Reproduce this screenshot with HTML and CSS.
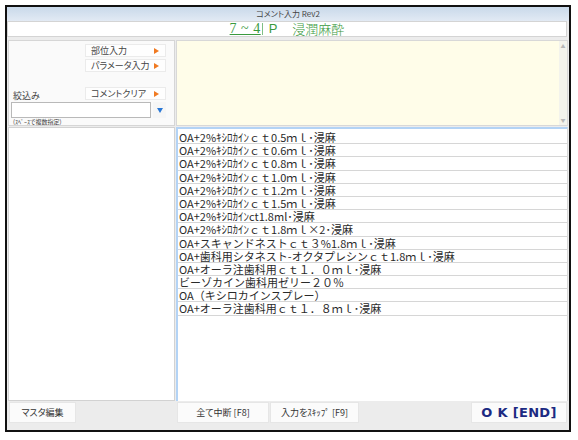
FILE: index.html
```html
<!DOCTYPE html>
<html lang="ja">
<head>
<meta charset="utf-8">
<title>コメント入力 Rev2</title>
<link rel="stylesheet" href="styles.css">
</head>
<body>
<div class="window">
  <div class="titlebar">コメント入力 Rev2</div>
  <div class="header">
    <span class="range">7 ~ 4</span><span class="caret"></span>
    <span class="page">P</span>
    <span class="kind">浸潤麻酔</span>
  </div>
  <div class="main">
    <div class="ctrl-panel">
      <div class="side-btn">部位入力<span class="tri-r"></span></div>
      <div class="side-btn second">パラメータ入力<span class="tri-r"></span></div>
      <div class="filter-row">
        <span class="filter-label">絞込み</span>
        <div class="side-btn">コメントクリア<span class="tri-r"></span></div>
      </div>
      <div class="input-row">
        <div class="filter-input"></div>
        <div class="drop-btn"><span class="tri-d"></span></div>
      </div>
      <div class="hint">(ｽﾍﾟｰｽで複数指定)</div>
    </div>
    <div class="memo">
      <div class="memo-text"></div>
      <div class="memo-scroll"><span class="arrow">&#9650;</span><span class="arrow">&#9660;</span></div>
    </div>
    <div class="side-list"></div>
    <div class="list">
      <div class="row">OA+2%ｷｼﾛｶｲﾝｃｔ0.5ｍｌ･浸麻</div>
      <div class="row">OA+2%ｷｼﾛｶｲﾝｃｔ0.6ｍｌ･浸麻</div>
      <div class="row">OA+2%ｷｼﾛｶｲﾝｃｔ0.8ｍｌ･浸麻</div>
      <div class="row">OA+2%ｷｼﾛｶｲﾝｃｔ1.0ｍｌ･浸麻</div>
      <div class="row">OA+2%ｷｼﾛｶｲﾝｃｔ1.2ｍｌ･浸麻</div>
      <div class="row">OA+2%ｷｼﾛｶｲﾝｃｔ1.5ｍｌ･浸麻</div>
      <div class="row">OA+2%ｷｼﾛｶｲﾝct1.8ml･浸麻</div>
      <div class="row">OA+2%ｷｼﾛｶｲﾝｃｔ1.8ｍｌ×2･浸麻</div>
      <div class="row">OA+スキャンドネストｃｔ３%1.8ｍｌ･浸麻</div>
      <div class="row">OA+歯科用シタネスト-オクタプレシンｃｔ1.8ｍｌ･浸麻</div>
      <div class="row">OA+オーラ注歯科用ｃｔ１．０ｍｌ･浸麻</div>
      <div class="row">ビーゾカイン歯科用ゼリー２０％</div>
      <div class="row">OA（キシロカインスプレー）</div>
      <div class="row">OA+オーラ注歯科用ｃｔ１．８ｍｌ･浸麻</div>
    </div>
  </div>
  <div class="footer">
    <div class="fbtn btn-master">マスタ編集</div>
    <div class="fbtn btn-stop">全て中断 [F8]</div>
    <div class="fbtn btn-skip">入力をｽｷｯﾌﾟ [F9]</div>
    <div class="fbtn btn-ok">O K [END]</div>
  </div>
</div>
</body>
</html>
```
FILE: styles.css
```css
html, body {
  margin: 0;
  padding: 0;
  background: #ffffff;
}
body {
  font-family: "Noto Sans CJK JP", "Noto Sans", sans-serif;
  color: #2a2a2a;
}
.window {
  margin: 5px 0 0 5px;
  width: 566px;
  height: 427px;
  box-sizing: border-box;
  border: 2px solid #111111;
  background: #ececec;
  display: flex;
  flex-direction: column;
}
.titlebar {
  height: 14px;
  line-height: 14px;
  font-size: 8px;
  text-align: center;
  color: #444;
  background: linear-gradient(#c9d9ea, #e2eaf4);
  font-feature-settings: "palt";
}
.header {
  height: 16px;
  margin-right: 2px;
  box-sizing: border-box;
  border: 1px solid #d4d4d4;
  background: #ffffff;
  display: flex;
  justify-content: center;
  align-items: center;
  color: #3a9a3e;
  font-size: 13px;
  line-height: 14px;
}
.range {
  font-family: "Liberation Serif", serif;
  font-size: 14px;
  text-decoration: underline;
  letter-spacing: 0.5px;
}
.caret {
  width: 1px;
  height: 12px;
  background: #7fbf86;
  margin-left: 1px;
}
.page {
  margin-left: 6px;
  font-family: "Liberation Sans", sans-serif;
  font-size: 13px;
}
.kind {
  margin-left: 15px;
  font-size: 13px;
  font-weight: 300;
}
.main {
  flex: 1;
  display: grid;
  grid-template-columns: 167px 1fr;
  grid-template-rows: 86px 1fr;
  column-gap: 1px;
  row-gap: 1px;
  padding: 3px 1px 1px 1px;
  min-height: 0;
}
.ctrl-panel {
  box-sizing: border-box;
  border: 1px solid #d6d6d6;
  background: #fafafa;
  padding: 3px 8px 0 2px;
  display: flex;
  flex-direction: column;
  font-size: 9px;
  font-feature-settings: "palt";
}
.side-btn {
  align-self: flex-end;
  width: 81px;
  height: 13px;
  box-sizing: border-box;
  border: 1px solid #ebebeb;
  background: #fefefe;
  display: flex;
  align-items: center;
  justify-content: space-between;
  padding: 0 6px 0 5px;
  line-height: 11px;
  color: #444;
}
.side-btn.second {
  margin-top: 2px;
}
.tri-r {
  width: 0;
  height: 0;
  border-top: 3px solid transparent;
  border-bottom: 3px solid transparent;
  border-left: 5px solid #f07a22;
}
.filter-row {
  margin-top: 15px;
  display: flex;
  justify-content: space-between;
  align-items: flex-end;
}
.filter-label {
  padding-left: 2px;
  line-height: 9px;
  color: #444;
}
.input-row {
  margin-top: 2px;
  display: flex;
  height: 16px;
  gap: 2px;
}
.filter-input {
  width: 140px;
  box-sizing: border-box;
  border: 1px solid #b9b9b9;
  background: #ffffff;
}
.drop-btn {
  flex: 1;
  display: flex;
  align-items: center;
  justify-content: center;
  background: #f6f6f6;
}
.tri-d {
  width: 0;
  height: 0;
  border-left: 3px solid transparent;
  border-right: 3px solid transparent;
  border-top: 5px solid #2a78d6;
}
.hint {
  margin-top: 1px;
  font-size: 6px;
  line-height: 6px;
  padding-left: 2px;
  color: #444;
}
.memo {
  box-sizing: border-box;
  border: 1px solid #d8d8d8;
  background: #fffde9;
  display: flex;
}
.memo-text {
  flex: 1;
}
.memo-scroll {
  width: 8px;
  background: #f3f3ec;
  display: flex;
  flex-direction: column;
  justify-content: space-between;
  align-items: center;
  padding: 2px 0;
}
.arrow {
  font-size: 5px;
  line-height: 6px;
  color: #b8b8b8;
}
.side-list {
  box-sizing: border-box;
  border: 1px solid #d2d2d2;
  background: #ffffff;
}
.list {
  box-sizing: border-box;
  border-top: 2px solid #b3d3f5;
  border-left: 2px solid #b3d3f5;
  border-right: 1px solid #d8d8d8;
  background: #ffffff;
  padding-top: 2px;
  font-size: 11px;
}
.row {
  height: 13.2px;
  box-sizing: border-box;
  border-bottom: 1px solid #d6d6d6;
  line-height: 12.2px;
  padding-left: 1px;
  white-space: nowrap;
  color: #2a2a2a;
}
.footer {
  height: 28px;
  display: flex;
  align-items: flex-start;
  padding: 0 2px;
}
.fbtn {
  height: 21px;
  box-sizing: border-box;
  border: 1px solid #e6e6e6;
  background: #fbfbfb;
  display: flex;
  align-items: center;
  justify-content: center;
  font-size: 9px;
  color: #333;
  font-feature-settings: "palt";
}
.btn-master {
  width: 67px;
}
.btn-stop {
  width: 92px;
  margin-left: 101px;
}
.btn-skip {
  width: 89px;
  margin-left: 1px;
}
.btn-ok {
  width: 96px;
  margin-left: auto;
  font-family: "DejaVu Sans", "Noto Sans", sans-serif;
  font-weight: bold;
  font-size: 13px;
  color: #1c2a82;
  letter-spacing: 0.3px;
}
```
